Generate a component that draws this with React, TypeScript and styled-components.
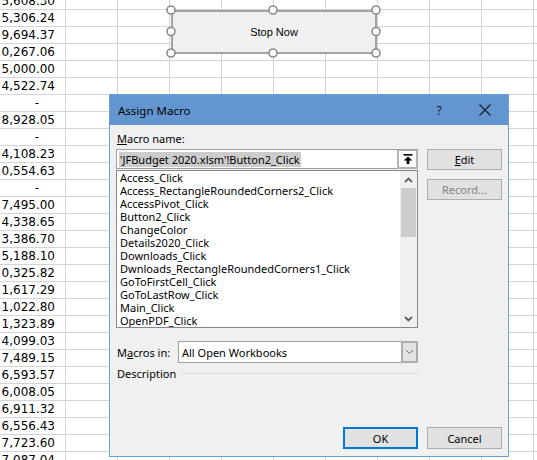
import styled, { createGlobalStyle } from "styled-components";

const values = [
  "5,608.30", "5,306.24", "9,694.37", "0,267.06", "5,000.00", "4,522.74", "-",
  "8,928.05", "-", "4,108.23", "0,554.63", "-", "7,495.00", "4,338.65",
  "3,386.70", "5,188.10", "0,325.82", "1,617.29", "1,022.80", "1,323.89",
  "4,099.03", "7,489.15", "6,593.57", "6,008.05", "6,911.32", "6,556.43",
  "7,723.60", "7,087.04",
];

const macros = [
  "Access_Click",
  "Access_RectangleRoundedCorners2_Click",
  "AccessPivot_Click",
  "Button2_Click",
  "ChangeColor",
  "Details2020_Click",
  "Downloads_Click",
  "Dwnloads_RectangleRoundedCorners1_Click",
  "GoToFirstCell_Click",
  "GoToLastRow_Click",
  "Main_Click",
  "OpenPDF_Click",
];

const EMPTY_COLS = 10;

const App = () => {
  return (
    <>
      <GlobalStyle />
      <Page>
        <Sheet>
          {values.map((v, i) => (
            <Row key={i}>
              <NumCell $dash={v === "-"}>{v}</NumCell>
              {Array.from({ length: EMPTY_COLS }).map((_, j) => (
                <Cell key={j} />
              ))}
            </Row>
          ))}
        </Sheet>

        <ShapeButton>
          Stop Now
          <Handles width="215" height="53" viewBox="0 0 215 53">
            {[
              [5, 5], [107, 5], [210, 5],
              [5, 26.5], [210, 26.5],
              [5, 48], [107, 48], [210, 48],
            ].map(([cx, cy], i) => (
              <circle key={i} cx={cx} cy={cy} r="4" fill="#fff" stroke="#8c8c8c" strokeWidth="1.6" />
            ))}
          </Handles>
        </ShapeButton>

        <Dialog>
          <TitleBar>
            <Title>Assign Macro</Title>
            <TitleButton>?</TitleButton>
            <TitleButton>
              <svg width="12" height="12" viewBox="0 0 12 12">
                <path d="M0.5 0.5 L11.5 11.5 M11.5 0.5 L0.5 11.5" stroke="#1a1a1a" strokeWidth="1.1" />
              </svg>
            </TitleButton>
          </TitleBar>

          <Body>
            <TopGrid>
              <Label>
                <u>M</u>acro name:
              </Label>
              <span />
              <NameInput>
                <InputText>
                  <Selected>'JFBudget 2020.xlsm'!Button2_Click</Selected>
                </InputText>
                <CollapseButton>
                  <svg width="10" height="10" viewBox="0 0 10 10">
                    <rect x="0.5" y="0" width="9" height="1.6" fill="#000" />
                    <path d="M5 2.4 L9.2 6.6 L6.4 6.6 L6.4 10 L3.6 10 L3.6 6.6 L0.8 6.6 Z" fill="#000" />
                  </svg>
                </CollapseButton>
              </NameInput>
              <DlgButton>
                <u>E</u>dit
              </DlgButton>
              <MacroList>
                <Items>
                  {macros.map((m) => (
                    <Item key={m}>{m}</Item>
                  ))}
                </Items>
                <ScrollBar>
                  <ScrollArrow>
                    <svg width="9" height="6" viewBox="0 0 9 6">
                      <path d="M1 5 L4.5 1.5 L8 5" stroke="#606060" strokeWidth="1.8" fill="none" />
                    </svg>
                  </ScrollArrow>
                  <Thumb />
                  <Track />
                  <ScrollArrow>
                    <svg width="9" height="6" viewBox="0 0 9 6">
                      <path d="M1 1 L4.5 4.5 L8 1" stroke="#606060" strokeWidth="1.8" fill="none" />
                    </svg>
                  </ScrollArrow>
                </ScrollBar>
              </MacroList>
              <DlgButton $disabled $top={9}>
                Record...
              </DlgButton>
            </TopGrid>

            <MacrosInRow>
              <InlineLabel>
                M<u>a</u>cros in:
              </InlineLabel>
              <Select>
                <SelectText>All Open Workbooks</SelectText>
                <SelectArrow>
                  <svg width="9" height="6" viewBox="0 0 9 6">
                    <path d="M1 1 L4.5 4.5 L8 1" stroke="#6a6a6a" strokeWidth="1" fill="none" />
                  </svg>
                </SelectArrow>
              </Select>
            </MacrosInRow>

            <DescriptionRow>
              <InlineLabel>Description</InlineLabel>
              <Rule />
            </DescriptionRow>

            <Footer>
              <DlgButton $primary>OK</DlgButton>
              <DlgButton $tall>Cancel</DlgButton>
            </Footer>
          </Body>
        </Dialog>
      </Page>
    </>
  );
};

export default App;

const GlobalStyle = createGlobalStyle`
  html, body {
    margin: 0;
    padding: 0;
    background: #fff;
    overflow: hidden;
  }
  * {
    box-sizing: border-box;
  }
`;

const Page = styled.div`
  position: relative;
  width: 537px;
  height: 460px;
  overflow: hidden;
  background: #fff;
`;

const Sheet = styled.div`
  margin-top: -7px;
  display: flex;
  flex-direction: column;
`;

const Row = styled.div`
  display: flex;
  height: 17px;
`;

const Cell = styled.div`
  flex: 0 0 52px;
  height: 17px;
  border-right: 1px solid #d4d4d4;
  border-bottom: 1px solid #d4d4d4;
`;

const NumCell = styled.div<{ $dash?: boolean }>`
  flex: 0 0 66px;
  height: 17px;
  border-right: 1px solid #d4d4d4;
  border-bottom: 1px solid #d4d4d4;
  padding-right: ${(p) => (p.$dash ? "26px" : "10px")};
  text-align: right;
  font-family: "DejaVu Sans", Verdana, sans-serif;
  font-size: 12px;
  line-height: 16px;
  color: #000;
  overflow: hidden;
  white-space: nowrap;
`;

const ShapeButton = styled.div`
  position: absolute;
  left: 171px;
  top: 10px;
  width: 206px;
  height: 44px;
  background: #f0f0f0;
  border: 2px solid #a3a3a3;
  display: flex;
  align-items: center;
  justify-content: center;
  font-family: "Liberation Sans", Arial, sans-serif;
  font-size: 11px;
  color: #000;
`;

const Handles = styled.svg`
  position: absolute;
  left: -7px;
  top: -7px;
  overflow: visible;
`;

const Dialog = styled.div`
  position: absolute;
  left: 109px;
  top: 94px;
  width: 400px;
  height: 363px;
  border: 1px solid #6b9fd8;
  background: #f0f0f0;
  display: flex;
  flex-direction: column;
  font-family: "Noto Sans", "Segoe UI", sans-serif;
  font-size: 11px;
  color: #000;
`;

const TitleBar = styled.div`
  height: 30px;
  background: #6396d0;
  display: flex;
  align-items: center;
  padding-left: 8px;
`;

const Title = styled.div`
  flex: 1;
  font-size: 11.5px;
  color: #000;
`;

const TitleButton = styled.div`
  width: 46px;
  height: 30px;
  display: flex;
  align-items: center;
  justify-content: center;
  font-size: 12px;
  color: #1a1a1a;
`;

const Body = styled.div`
  flex: 1;
  display: flex;
  flex-direction: column;
  padding: 6px 6px 7px 6px;
`;

const TopGrid = styled.div`
  display: grid;
  grid-template-columns: 302px 75px;
  column-gap: 9px;
  align-items: start;
`;

const Label = styled.div`
  height: 18px;
  line-height: 16px;
  padding-left: 1px;
  white-space: nowrap;
`;

const InlineLabel = styled.div`
  padding-left: 1px;
  white-space: nowrap;
  line-height: 15px;
`;

const NameInput = styled.div`
  height: 20px;
  background: #fff;
  border: 1px solid #a0a0a0;
  display: flex;
  align-items: center;
  padding-left: 2px;
`;

const InputText = styled.div`
  flex: 1;
  white-space: nowrap;
  line-height: 15px;
`;

const Selected = styled.span`
  display: inline-block;
  background: #cccccc;
  padding: 0 1px 0 1px;
  line-height: 15px;
`;

const CollapseButton = styled.div`
  width: 21px;
  height: 19px;
  margin-right: -1px;
  border: 2px solid #b4b4b4;
  border-top-width: 1px;
  background: #fff;
  display: flex;
  align-items: center;
  justify-content: center;
`;

const DlgButton = styled.div<{ $disabled?: boolean; $primary?: boolean; $tall?: boolean; $top?: number }>`
  width: 75px;
  height: ${(p) => (p.$primary || p.$tall ? "22px" : "21px")};
  margin-top: ${(p) => p.$top ?? 0}px;
  background: #e1e1e1;
  border: ${(p) => (p.$primary ? "2px solid #0078d7" : "1px solid #adadad")};
  color: ${(p) => (p.$disabled ? "#838383" : "#000")};
  display: flex;
  align-items: center;
  justify-content: center;
  white-space: nowrap;
`;

const MacroList = styled.div`
  height: 158px;
  border: 1px solid #828790;
  background: #fff;
  display: flex;
`;

const Items = styled.div`
  flex: 1;
  padding-left: 3px;
  overflow: hidden;
`;

const Item = styled.div`
  height: 13px;
  line-height: 13px;
  white-space: nowrap;
`;

const ScrollBar = styled.div`
  width: 17px;
  background: #f0f0f0;
  display: flex;
  flex-direction: column;
`;

const ScrollArrow = styled.div`
  height: 17px;
  display: flex;
  align-items: center;
  justify-content: center;
`;

const Thumb = styled.div`
  height: 49px;
  margin: 0 1px;
  background: #cdcdcd;
`;

const Track = styled.div`
  flex: 1;
`;

const MacrosInRow = styled.div`
  display: flex;
  align-items: center;
  margin-top: 13px;
  height: 22px;
  & > ${InlineLabel} {
    width: 62px;
  }
`;

const Select = styled.div`
  width: 240px;
  height: 22px;
  background: #fff;
  border: 1px solid #a0a0a0;
  display: flex;
  align-items: center;
`;

const SelectText = styled.div`
  flex: 1;
  padding-left: 3px;
  white-space: nowrap;
`;

const SelectArrow = styled.div`
  width: 17px;
  height: 22px;
  margin: -1px -1px -1px 0;
  background: #e3e3e3;
  border: 2px solid #adadad;
  display: flex;
  align-items: center;
  justify-content: center;
`;

const DescriptionRow = styled.div`
  display: flex;
  align-items: center;
  margin-top: 2px;
  height: 16px;
  width: 302px;
`;

const Rule = styled.div`
  flex: 1;
  margin-left: 6px;
  height: 1px;
  background: #dcdcdc;
`;

const Footer = styled.div`
  margin-top: auto;
  display: flex;
  justify-content: flex-end;
  gap: 9px;
`;
